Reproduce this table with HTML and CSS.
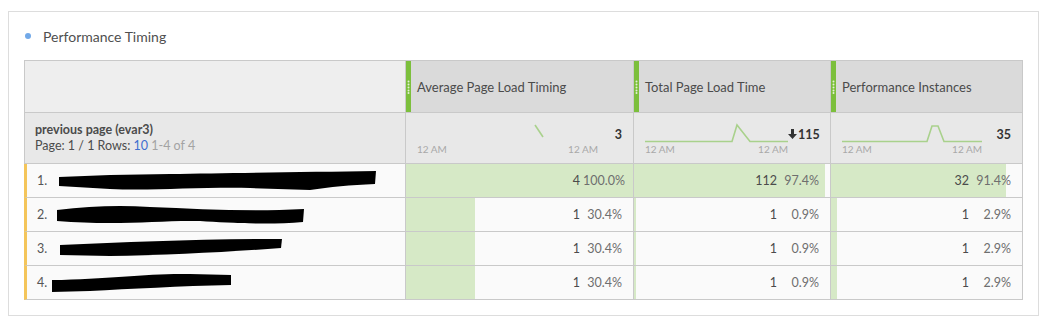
FILE: index.html
```html
<!DOCTYPE html>
<html>
<head>
<meta charset="utf-8">
<link rel="stylesheet" href="styles.css">
</head>
<body>
<div class="panel">
  <div class="title"><span class="dot"></span><span class="title-text">Performance Timing</span></div>
  <div class="table">
    <!-- header -->
    <div class="cell head head-first"></div>
    <div class="cell head metric-head"><span class="grip"><svg width="5" height="14" viewBox="0 0 5 14"><circle cx="2.5" cy="1.5" r="1" fill="#e4f1d6"/><circle cx="2.5" cy="4.5" r="1" fill="#e4f1d6"/><circle cx="2.5" cy="7.5" r="1" fill="#e4f1d6"/><circle cx="2.5" cy="10.5" r="1" fill="#e4f1d6"/><circle cx="2.5" cy="13" r="1" fill="#e4f1d6"/></svg></span><span class="head-text">Average Page Load Timing</span></div>
    <div class="cell head metric-head"><span class="grip"><svg width="5" height="14" viewBox="0 0 5 14"><circle cx="2.5" cy="1.5" r="1" fill="#e4f1d6"/><circle cx="2.5" cy="4.5" r="1" fill="#e4f1d6"/><circle cx="2.5" cy="7.5" r="1" fill="#e4f1d6"/><circle cx="2.5" cy="10.5" r="1" fill="#e4f1d6"/><circle cx="2.5" cy="13" r="1" fill="#e4f1d6"/></svg></span><span class="head-text">Total Page Load Time</span></div>
    <div class="cell head metric-head last"><span class="grip"><svg width="5" height="14" viewBox="0 0 5 14"><circle cx="2.5" cy="1.5" r="1" fill="#e4f1d6"/><circle cx="2.5" cy="4.5" r="1" fill="#e4f1d6"/><circle cx="2.5" cy="7.5" r="1" fill="#e4f1d6"/><circle cx="2.5" cy="10.5" r="1" fill="#e4f1d6"/><circle cx="2.5" cy="13" r="1" fill="#e4f1d6"/></svg></span><span class="head-text">Performance Instances</span></div>

    <!-- summary -->
    <div class="cell summary summary-first">
      <div class="dim-name">previous page (evar3)</div>
      <div class="pager">Page: 1 / 1 Rows: <span class="rows">10</span> <span class="range">1-4 of 4</span></div>
    </div>
    <div class="cell summary metric-sum">
      <div class="spark spark-avg">
        <svg width="181" height="24" viewBox="0 0 181 24"><path d="M118 6 L126 18" stroke="#a9d18c" stroke-width="1.6" fill="none"/></svg>
        <div class="spark-labels"><span>12 AM</span><span>12 AM</span></div>
      </div>
      <div class="sum-val">3</div>
    </div>
    <div class="cell summary metric-sum">
      <div class="spark spark-total">
        <svg width="143" height="24" viewBox="0 0 143 24"><path d="M0 22.5 L87 22.5 L92 6 L105 22.5 L143 22.5" stroke="#a9d18c" stroke-width="1.6" fill="none"/></svg>
        <div class="spark-labels"><span>12 AM</span><span>12 AM</span></div>
      </div>
      <div class="sum-val sum-arrow"><svg class="arrow" width="9" height="10" viewBox="0 0 9 10"><path d="M3 0 H6 V5 H9 L4.5 10 L0 5 H3 Z" fill="#333"/></svg>115</div>
    </div>
    <div class="cell summary metric-sum last">
      <div class="spark spark-inst">
        <svg width="140" height="24" viewBox="0 0 140 24"><path d="M0 22.5 L85 22.5 L90 7 L96 7 L102 22.5 L140 22.5" stroke="#a9d18c" stroke-width="1.6" fill="none"/></svg>
        <div class="spark-labels"><span>12 AM</span><span>12 AM</span></div>
      </div>
      <div class="sum-val sum-inst">35</div>
    </div>

    <!-- row 1 -->
    <div class="cell row-first"><span class="idx">1.</span><svg class="redact" width="340" height="22" viewBox="0 0 340 22"><path d="M9 7 L60 5 L120 4 C180 3 260 2 326 1 L325 14 C300 15 280 17 260 20 L200 18 C150 17 100 21 60 19 L9 16 Z" fill="#000"/></svg></div>
    <div class="cell val" style="--pct:100%"><span class="num">4</span><span class="pct">100.0%</span></div>
    <div class="cell val" style="--pct:97.4%"><span class="num">112</span><span class="pct">97.4%</span></div>
    <div class="cell val last" style="--pct:91.4%"><span class="num">32</span><span class="pct">91.4%</span></div>

    <!-- row 2 -->
    <div class="cell row-first"><span class="idx">2.</span><svg class="redact" width="340" height="22" viewBox="0 0 340 22"><path d="M7 6 C40 2 70 1 100 3 C150 5 200 8 254 5 L253 18 C220 21 180 19 150 17 C110 16 70 22 7 17 Z" fill="#000"/></svg></div>
    <div class="cell val" style="--pct:30.4%"><span class="num">1</span><span class="pct">30.4%</span></div>
    <div class="cell val" style="--pct:0.9%"><span class="num">1</span><span class="pct">0.9%</span></div>
    <div class="cell val last" style="--pct:2.9%"><span class="num">1</span><span class="pct">2.9%</span></div>

    <!-- row 3 -->
    <div class="cell row-first"><span class="idx">3.</span><svg class="redact" width="340" height="22" viewBox="0 0 340 22"><path d="M10 7 C80 4 150 1 232 1 L231 10 C180 14 120 17 60 18 L10 17 Z" fill="#000"/></svg></div>
    <div class="cell val" style="--pct:30.4%"><span class="num">1</span><span class="pct">30.4%</span></div>
    <div class="cell val" style="--pct:0.9%"><span class="num">1</span><span class="pct">0.9%</span></div>
    <div class="cell val last" style="--pct:2.9%"><span class="num">1</span><span class="pct">2.9%</span></div>

    <!-- row 4 -->
    <div class="cell row-first"><span class="idx">4.</span><svg class="redact" width="340" height="22" viewBox="0 0 340 22"><path d="M2 8 C60 7 100 1 140 2 L181 3 L181 13 C130 14 80 17 40 19 L2 20 Z" fill="#000"/></svg></div>
    <div class="cell val" style="--pct:30.4%"><span class="num">1</span><span class="pct">30.4%</span></div>
    <div class="cell val" style="--pct:0.9%"><span class="num">1</span><span class="pct">0.9%</span></div>
    <div class="cell val last" style="--pct:2.9%"><span class="num">1</span><span class="pct">2.9%</span></div>
  </div>
</div>
</body>
</html>
```

FILE: styles.css
```css
* { box-sizing: border-box; }

body {
  margin: 8px;
  background: #ffffff;
  font-family: Lato, "Open Sans", "Liberation Sans", sans-serif;
  color: #4b4b4b;
}

.panel {
  margin-top: 3px;
  width: 1031px;
  border: 1px solid #dddddd;
  padding: 14px 15px 15px 15px;
}

.title {
  display: flex;
  align-items: center;
  height: 20px;
  margin-bottom: 14px;
}

.dot {
  width: 6px;
  height: 6px;
  border-radius: 50%;
  background: #72a9e8;
  margin-left: 1px;
  margin-right: 12px;
}

.title-text {
  font-size: 14px;
  font-weight: 400;
  color: #4f4f4f;
}

.table {
  display: grid;
  grid-template-columns: 382px 228px 197px 192px;
  grid-template-rows: 53px 51px 34px 34px 34px 34px;
}

.cell {
  border-right: 1px solid #c9c9c9;
  border-bottom: 1px solid #c9c9c9;
  display: flex;
  align-items: center;
}

.head {
  border-top: 1px solid #c9c9c9;
  background: #dadada;
}

.head-first {
  background: #eeeeee;
  border-left: 1px solid #c9c9c9;
}

.grip {
  align-self: stretch;
  width: 5px;
  background: #7cbf3c;
  display: flex;
  align-items: center;
  justify-content: center;
}

.grip svg { display: block; }

.head-text {
  margin-left: 6px;
  font-size: 13px;
  color: #4b4b4b;
}

.summary {
  background: #e8e8e8;
}

.summary-first {
  border-left: 1px solid #c9c9c9;
  flex-direction: column;
  align-items: flex-start;
  justify-content: center;
  padding-left: 10px;
  font-size: 12.5px;
  line-height: 16px;
}

.dim-name {
  font-weight: 700;
  color: #4b4b4b;
}

.pager { color: #4b4b4b; }
.rows { color: #3d6fcf; }
.range { color: #a3a3a3; }

.metric-sum {
  align-items: flex-end;
  padding: 0 11px 8px 11px;
}

.spark {
  display: flex;
  flex-direction: column;
}

.spark svg { display: block; overflow: visible; }

.spark-labels {
  display: flex;
  justify-content: space-between;
  font-size: 10px;
  line-height: 12px;
  color: #a8a8a8;
}

.sum-val {
  align-self: center;
  margin-left: auto;
  font-size: 12.5px;
  font-weight: 700;
  color: #333333;
  display: flex;
  align-items: center;
}

.arrow {
  display: block;
  margin-right: 1px;
}

.row-first {
  border-left: 3px solid #f4c55a;
  background: #fafafa;
  padding-left: 10px;
  font-size: 12.5px;
}

.idx {
  width: 13px;
  color: #555555;
}

.redact { display: block; flex: none; }

.val {
  justify-content: flex-end;
  padding-right: 11px;
  font-size: 12.5px;
  background: linear-gradient(to right, #d6e9c6 var(--pct), #fafafa var(--pct));
}

.num {
  color: #4b4b4b;
  padding-right: 3px;
}

.pct {
  width: 39px;
  text-align: right;
  color: #6e6e6e;
}
```
